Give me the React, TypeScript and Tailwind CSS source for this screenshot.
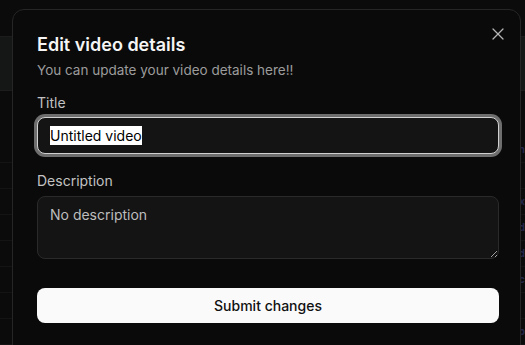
import React from 'react'
import { X } from 'lucide-react'

const rows = ['g.yn', '', 'box', 'uerd', 'uerd', 'spac', '', 'top']

export default function App() {
  return (
    <div
      className="relative h-[345px] w-[525px] overflow-hidden bg-[#0b0b0b]"
      style={{ fontFamily: 'Inter, "Noto Sans", sans-serif' }}
    >
      {/* page behind the dialog, dimmed by the overlay */}
      <div className="flex h-full flex-col">
        <div className="h-[40px]" />
        <div className="flex h-[60px] items-center border-y border-[#1c1c1c] bg-[#151717] pl-1 text-[10px] text-[#444]">
          <span className="ml-auto pr-1">×</span>
        </div>
        <div className="h-[50px]" />
        <div className="flex flex-col">
          {rows.map((label, i) => (
            <div
              key={i}
              className="flex h-[26px] items-center justify-end border-b border-[#141414] text-[10px] font-bold text-[#23264a]"
            >
              {label}
            </div>
          ))}
        </div>
      </div>

      {/* dialog */}
      <div className="absolute top-[9px] left-[12px] h-[360px] w-[509px] rounded-xl border border-[#262626] bg-[#0a0a0a] pt-[22px] pr-[21px] pl-[24px]">
        <button className="absolute top-[14px] right-[12px] text-[#b5b5b5]">
          <X size={20} strokeWidth={1.5} />
        </button>
        <h2 className="text-[18px] leading-[26px] font-semibold text-[#f5f5f5]">Edit video details</h2>
        <p className="mt-[2px] text-[13.5px] leading-[20px] text-[#9c9c9c]">You can update your video details here!!</p>

        <div className="mt-[13px] flex flex-col">
          <label className="text-[14px] leading-[20px] text-[#c2c2c2]">Title</label>
          <div className="mt-[4px] flex h-[37px] items-center rounded-lg border border-[#d0d0d0] bg-[#141414] px-[12px] ring-[3px] ring-[#6e6e6e]">
            <span className="bg-white text-[14px] leading-[19px] text-black">Untitled video</span>
          </div>
        </div>

        <div className="mt-[17px] flex flex-col">
          <label className="text-[14px] leading-[20px] text-[#c2c2c2]">Description</label>
          <textarea
            className="mt-[5px] h-[63px] resize-y rounded-lg border border-[#2a2a2a] bg-[#141414] px-[12px] py-[8px] text-[14px] leading-[20px] text-white outline-none placeholder:text-[#bdbdbd]"
            placeholder="No description"
          />
        </div>

        <button className="mt-[29px] flex h-[35px] w-full items-center justify-center rounded-lg bg-[#fafafa] text-[14px] font-medium text-[#111]">
          Submit changes
        </button>
      </div>
    </div>
  )
}
